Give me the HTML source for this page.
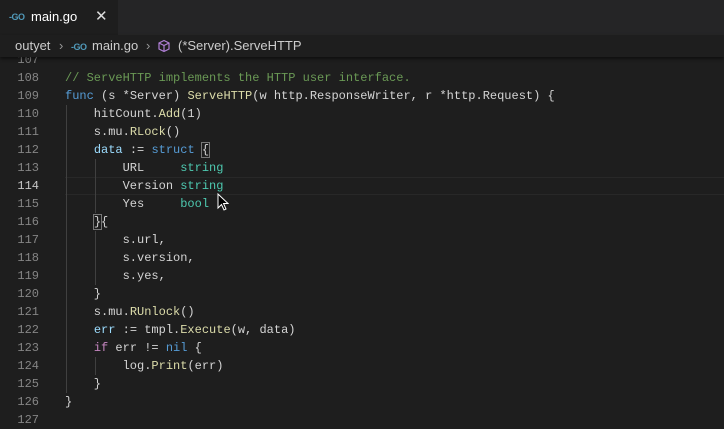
<!DOCTYPE html>
<html><head><style>
body{margin:0;width:724px;height:422px;background:#1e1e1e;overflow:hidden;font-family:"Liberation Sans",sans-serif;position:relative}
.tabs{position:absolute;top:0;left:0;width:724px;height:35px;background:#252526}
.tab{position:absolute;left:0;top:0;width:118px;height:35px;background:#1e1e1e;color:#fff;font-size:13px}
.go{color:#519aba;font-weight:bold;font-size:9px;letter-spacing:-0.5px}
.bc{position:absolute;top:35px;left:0;width:724px;height:22px;background:#1e1e1e;color:#cccccc;font-size:13px;line-height:22px;z-index:2;box-shadow:0 2px 3px rgba(0,0,0,.5)}
.code{position:absolute;left:0;top:51px;font-family:"Liberation Mono",monospace;font-size:12px;line-height:18px;color:#d4d4d4;white-space:pre}
.ln{display:inline-block;width:39px;text-align:right;color:#858585;margin-right:26px}
.k{color:#569cd6}.f{color:#dcdcaa}.v{color:#9cdcfe}.c{color:#6a9955}.t{color:#4ec9b0}.n{color:#b5cea8}.p{color:#c586c0}
.cur{position:absolute;left:65px;top:177px;width:659px;height:16px;border-top:1px solid #282828;border-bottom:1px solid #282828}
.g{position:absolute;width:1px;background:#404040}
</style></head><body>
<div class="tabs"><div class="tab"><span class="go" style="position:absolute;left:9px;top:12px">-GO</span><span style="position:absolute;left:31px;top:9px">main.go</span><span style="position:absolute;left:95px;top:7px;font-size:15px;color:#ddd">✕</span></div></div>
<div class="bc"><span style="position:absolute;left:15px">outyet</span><span style="position:absolute;left:59px;color:#999">›</span><span class="go" style="position:absolute;left:71px;top:1px">-GO</span><span style="position:absolute;left:92px">main.go</span><span style="position:absolute;left:146px;color:#999">›</span>
<svg style="position:absolute;left:157px;top:4px" width="14" height="14" viewBox="0 0 14 14" fill="none" stroke="#b180d7" stroke-width="1.2"><path d="M7 1.5L12 4v6L7 12.5 2 10V4z M2 4l5 2.5L12 4 M7 6.5v6"/></svg>
<span style="position:absolute;left:178px">(*Server).ServeHTTP</span></div>
<div class="cur"></div>
<div class="g" style="left:66px;top:105px;height:288px"></div>
<div class="g" style="left:95px;top:159px;height:54px"></div>
<div class="g" style="left:95px;top:231px;height:54px"></div>
<div class="g" style="left:95px;top:357px;height:18px"></div>
<div class="code"><span class="ln">107</span>
<span class="ln">108</span><span class="c">// ServeHTTP implements the HTTP user interface.</span>
<span class="ln">109</span><span class="k">func</span> (s *Server) <span class="f">ServeHTTP</span>(w http.ResponseWriter, r *http.Request) {
<span class="ln">110</span>    hitCount.<span class="f">Add</span>(1)
<span class="ln">111</span>    s.mu.<span class="f">RLock</span>()
<span class="ln">112</span>    <span class="v">data</span> := <span class="k">struct</span> <span style="outline:1px solid #777">{</span>
<span class="ln">113</span>        URL     <span class="t">string</span>
<span class="ln" style="color:#c6c6c6">114</span>        Version <span class="t">string</span>
<span class="ln">115</span>        Yes     <span class="t">bool</span>
<span class="ln">116</span>    <span style="outline:1px solid #777">}</span>{
<span class="ln">117</span>        s.url,
<span class="ln">118</span>        s.version,
<span class="ln">119</span>        s.yes,
<span class="ln">120</span>    }
<span class="ln">121</span>    s.mu.<span class="f">RUnlock</span>()
<span class="ln">122</span>    <span class="v">err</span> := tmpl.<span class="f">Execute</span>(w, data)
<span class="ln">123</span>    <span class="p">if</span> err != <span class="k">nil</span> {
<span class="ln">124</span>        log.<span class="f">Print</span>(err)
<span class="ln">125</span>    }
<span class="ln">126</span>}
<span class="ln">127</span></div>
<svg style="position:absolute;left:217px;top:193px" width="12" height="18" viewBox="0 0 12 18"><path d="M1 1v14l3.5-3.5 2.5 5.5 2-1-2.5-5.5H11z" fill="#000" stroke="#fff" stroke-width="1"/></svg>
</body></html>
